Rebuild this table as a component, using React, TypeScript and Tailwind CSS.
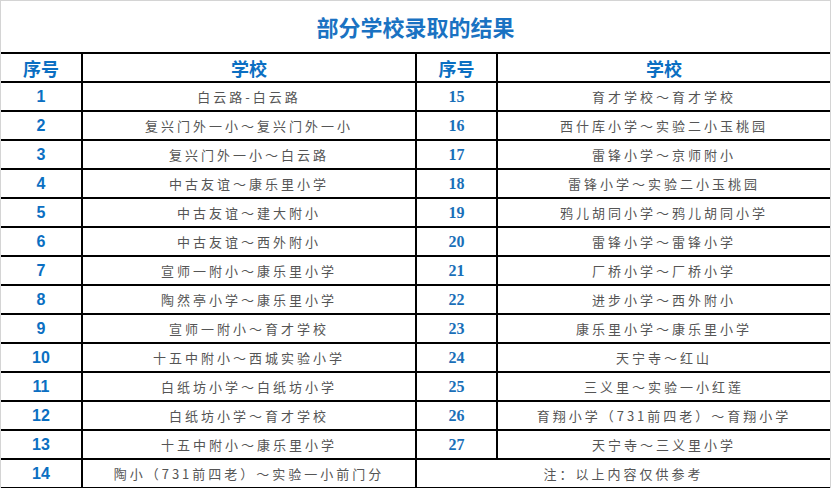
import React from 'react';

const leftRows: [string, string][] = [
  ['1', '白云路-白云路'],
  ['2', '复兴门外一小～复兴门外一小'],
  ['3', '复兴门外一小～白云路'],
  ['4', '中古友谊～康乐里小学'],
  ['5', '中古友谊～建大附小'],
  ['6', '中古友谊～西外附小'],
  ['7', '宣师一附小～康乐里小学'],
  ['8', '陶然亭小学～康乐里小学'],
  ['9', '宣师一附小～育才学校'],
  ['10', '十五中附小～西城实验小学'],
  ['11', '白纸坊小学～白纸坊小学'],
  ['12', '白纸坊小学～育才学校'],
  ['13', '十五中附小～康乐里小学'],
  ['14', '陶小（731前四老）～实验一小前门分'],
];

const rightRows: [string, string][] = [
  ['15', '育才学校～育才学校'],
  ['16', '西什库小学～实验二小玉桃园'],
  ['17', '雷锋小学～京师附小'],
  ['18', '雷锋小学～实验二小玉桃园'],
  ['19', '鸦儿胡同小学～鸦儿胡同小学'],
  ['20', '雷锋小学～雷锋小学'],
  ['21', '厂桥小学～厂桥小学'],
  ['22', '进步小学～西外附小'],
  ['23', '康乐里小学～康乐里小学'],
  ['24', '天宁寺～红山'],
  ['25', '三义里～实验一小红莲'],
  ['26', '育翔小学（731前四老）～育翔小学'],
  ['27', '天宁寺～三义里小学'],
];

const cjk = "font-['Noto_Sans_CJK_SC',sans-serif]";

export default function App() {
  return (
    <div className="w-[831px] h-[488px] overflow-hidden bg-white border-t border-l border-r border-[#d4d4d4]">
      <div
        className={`h-[51px] flex items-center justify-center text-[22px] font-bold text-[#1a72c2] ${cjk}`}
      >
        部分学校录取的结果
      </div>
      <table className="table-fixed border-collapse w-[830px]">
        <colgroup>
          <col className="w-[81px]" />
          <col className="w-[334px]" />
          <col className="w-[81px]" />
          <col className="w-[334px]" />
        </colgroup>
        <thead>
          <tr className="h-[29px]">
            {['序号', '学校', '序号', '学校'].map((h, i) => (
              <th
                key={i}
                className={`border-2 border-black first:border-l-0 text-[18px] font-bold text-[#0b6fc2] leading-none ${cjk}`}
              >
                {h}
              </th>
            ))}
          </tr>
        </thead>
        <tbody>
          {leftRows.map(([n, s], i) => {
            const r = rightRows[i];
            return (
              <tr key={n} className="h-[29px]">
                <td className="border-2 border-l-0 border-black text-center text-[16px] font-bold text-[#0b6fc2] font-['Liberation_Sans',sans-serif] leading-none">
                  {n}
                </td>
                <td
                  className={`border-2 border-black text-center text-[13px] text-[#555] tracking-[3px] leading-none ${cjk}`}
                >
                  {s}
                </td>
                {r ? (
                  <>
                    <td className="border-2 border-black text-center text-[16px] font-bold text-[#1a6fb8] font-['Liberation_Serif',serif] leading-none">
                      {r[0]}
                    </td>
                    <td
                      className={`border-2 border-black text-center text-[13px] text-[#555] tracking-[3px] leading-none ${cjk}`}
                    >
                      {r[1]}
                    </td>
                  </>
                ) : (
                  <td
                    colSpan={2}
                    className={`border-2 border-black text-center text-[13px] text-[#555] tracking-[3px] leading-none ${cjk}`}
                  >
                    注：以上内容仅供参考
                  </td>
                )}
              </tr>
            );
          })}
        </tbody>
      </table>
    </div>
  );
}
